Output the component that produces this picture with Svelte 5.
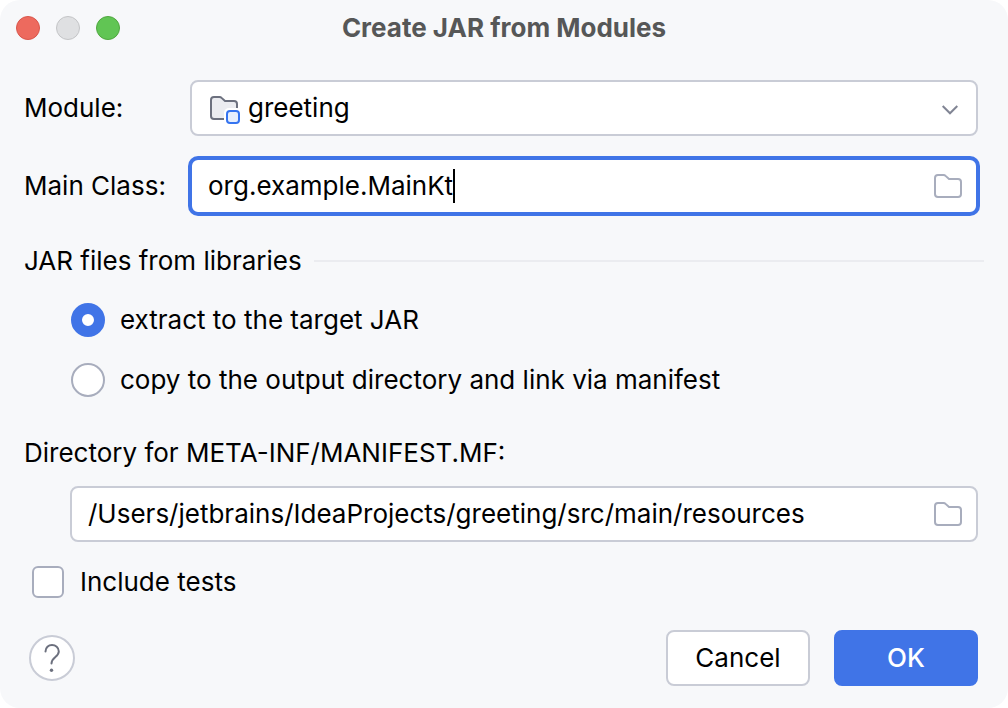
<script>
    let module = $state('greeting')
    let mainClass = $state('org.example.MainKt')
    let libraries = $state('extract')
    let directory = $state('/Users/jetbrains/IdeaProjects/greeting/src/main/resources')
    let includeTests = $state(false)
</script>

{#snippet folder()}
    <svg class="folder" width="32" height="32" viewBox="0 0 32 32" fill="none" aria-hidden="true">
        <path d="M3 8a3 3 0 0 1 3-3h5.500a3 3 0 0 1 2.100.9L17 9h9a3 3 0 0 1 3 3v12a3 3 0 0 1-3 3H6a3 3 0 0 1-3-3z" stroke="#a8adbd" stroke-width="2"/>
    </svg>
{/snippet}

<main class="dialog">
    <header class="titlebar">
        <div class="lights">
            <button class="light light--close" aria-label="Close"></button>
            <button class="light light--minimize" aria-label="Minimize" disabled></button>
            <button class="light light--zoom" aria-label="Zoom"></button>
        </div>
        <h1 class="title">Create JAR from Modules</h1>
    </header>

    <form class="content" onsubmit={(e) => e.preventDefault()}>
        <div class="fields">
            <label class="label" for="module">Module:</label>
            <div class="select">
                <select class="select__input" id="module" bind:value={module}>
                    <option value="greeting">greeting</option>
                </select>
                <svg class="select__icon" width="32" height="32" viewBox="0 0 32 32" fill="none" aria-hidden="true">
                    <path d="M3 8a3 3 0 0 1 3-3h5.500a3 3 0 0 1 2.100.9L17 9h9a3 3 0 0 1 3 3v15H3z" fill="#ebecf0"/>
                    <path d="M16 27H6a3 3 0 0 1-3-3V8a3 3 0 0 1 3-3h5.500a3 3 0 0 1 2.100.9L17 9h9a3 3 0 0 1 3 3v5" stroke="#6c707e" stroke-width="2"/>
                    <rect x="16" y="16" width="18" height="18" rx="5" fill="#fff"/>
                    <rect x="19" y="19" width="12" height="12" rx="3" fill="#e7effd" stroke="#3574f0" stroke-width="2"/>
                </svg>
                <svg class="select__arrow" width="32" height="32" viewBox="0 0 32 32" fill="none" aria-hidden="true">
                    <path d="M8.700 14l7.300 7.300 7.300-7.300" stroke="#818594" stroke-width="2"/>
                </svg>
            </div>

            <label class="label" for="mainClass">Main Class:</label>
            <div class="field field--active">
                <input class="field__input field__input--fit" id="mainClass" type="text" spellcheck="false" bind:value={mainClass}>
                <span class="caret"></span>
                <button class="browse" type="button" aria-label="Browse main class">{@render folder()}</button>
            </div>
        </div>

        <fieldset class="group">
            <legend class="group__legend">
                <span>JAR files from libraries</span>
                <span class="group__line"></span>
            </legend>
            <label class="option">
                <input class="radio" type="radio" name="libraries" value="extract" bind:group={libraries}>
                extract to the target JAR
            </label>
            <label class="option">
                <input class="radio" type="radio" name="libraries" value="copy" bind:group={libraries}>
                copy to the output directory and link via manifest
            </label>
        </fieldset>

        <label class="label label--directory" for="directory">Directory for META-INF/MANIFEST.MF:</label>
        <div class="field field--directory">
            <input class="field__input" id="directory" type="text" spellcheck="false" bind:value={directory}>
            <button class="browse" type="button" aria-label="Browse directory">{@render folder()}</button>
        </div>

        <label class="tests">
            <input class="checkbox" type="checkbox" bind:checked={includeTests}>
            Include tests
        </label>

        <footer class="footer">
            <button class="help" type="button" aria-label="Help">
                <svg width="42" height="42" viewBox="0 0 42 42" fill="none" aria-hidden="true">
                    <path d="M14.500 14.500C14.500 10.500 17.500 8 21 8s6.800 2.500 6.800 6.500c0 5.500-7.300 5.500-7.300 12" stroke="#6c707e" stroke-width="2" stroke-linecap="round"/>
                    <circle cx="20.500" cy="33.300" r="1.700" fill="#6c707e"/>
                </svg>
            </button>
            <button class="btn" type="button">Cancel</button>
            <button class="btn btn--primary" type="submit">OK</button>
        </footer>
    </form>
</main>

<style>
    :global(body) {
        background: #fff;
    }
    .dialog, .dialog * {
        box-sizing: border-box;
    }
    .dialog {
        border-radius: 20px;
        background: #f7f8fa;
        color: #000;
        font-family: Inter, "Liberation Sans", sans-serif;
        font-size: 26px;
        line-height: 32px;
    }
    input, select, button {
        margin: 0;
        font: inherit;
        color: inherit;
    }

    /* title bar */
    .titlebar {
        display: grid;
        grid-template-columns: 1fr auto 1fr;
        align-items: center;
        height: 56px;
        padding: 0 16px;
    }
    .lights {
        display: flex;
        gap: 16px;
    }
    .light {
        width: 24px;
        height: 24px;
        padding: 0;
        border: 1px solid;
        border-radius: 50%;
    }
    .light--close {
        border-color: #d9564b;
        background: #ed6a5e;
    }
    .light--minimize {
        border-color: #c4c5c7;
        background: #dfe0e2;
    }
    .light--zoom {
        border-color: #50a73f;
        background: #61c554;
    }
    .title {
        margin: 0;
        font-size: 26px;
        line-height: 32px;
        font-weight: 700;
        color: #565757;
    }

    /* fields */
    .content {
        padding: 24px 30px 22px 24px;
    }
    .fields {
        display: grid;
        grid-template-columns: 144px 1fr;
        align-items: center;
        gap: 22px;
    }
    .label {
        display: block;
        white-space: nowrap;
    }
    .select {
        position: relative;
    }
    .select__input {
        display: block;
        width: 100%;
        height: 56px;
        padding: 0 56px;
        border: 2px solid #c9ccd6;
        border-radius: 8px;
        background: #fff;
        appearance: none;
    }
    .select__icon, .select__arrow {
        position: absolute;
        top: 12px;
        pointer-events: none;
    }
    .select__icon {
        left: 18px;
        overflow: visible;
    }
    .select__arrow {
        right: 12px;
    }
    .field {
        display: flex;
        align-items: center;
        height: 56px;
        padding: 0 12px 0 16px;
        border: 2px solid #c9ccd6;
        border-radius: 8px;
        background: #fff;
    }
    .field--active {
        border-color: #4074e7;
        box-shadow: 0 0 0 2px #4074e7;
    }
    .field__input {
        flex: 1;
        min-width: 0;
        height: 32px;
        padding: 0;
        border: none;
        outline: none;
        background: transparent;
    }
    .field__input--fit {
        flex: none;
        field-sizing: content;
        caret-color: transparent;
    }
    .caret {
        width: 2px;
        height: 34px;
        background: #000;
    }
    .browse {
        display: flex;
        margin-left: auto;
        padding: 0;
        border: none;
        background: transparent;
    }

    /* libraries */
    .group {
        margin: 31px 0 0;
        padding: 0;
        border: none;
    }
    .group__legend {
        display: flex;
        align-items: center;
        gap: 12px;
        width: calc(100% + 6px);
        padding: 0;
        margin-bottom: 26px;
    }
    .group__line {
        flex: 1;
        height: 2px;
        background: #ebecf0;
    }
    .option {
        display: flex;
        align-items: center;
        gap: 15px;
        height: 34px;
        margin: 0 0 26px 47px;
    }
    .radio {
        width: 34px;
        height: 34px;
        border: 2px solid #a8adbd;
        border-radius: 50%;
        background: #fff;
        appearance: none;
    }
    .radio:checked {
        border: 11px solid #4074e7;
    }

    /* manifest */
    .label--directory {
        margin-top: 14px;
    }
    .field--directory {
        margin: 17px 0 0 46px;
    }
    .tests {
        display: flex;
        align-items: center;
        gap: 16px;
        margin: 24px 0 0 8px;
    }
    .checkbox {
        width: 32px;
        height: 32px;
        border: 2px solid #a8adbd;
        border-radius: 6px;
        background: #fff;
        appearance: none;
    }
    .checkbox:checked {
        border-color: #4074e7;
        background: #4074e7;
    }

    /* buttons */
    .footer {
        display: flex;
        align-items: center;
        gap: 24px;
        margin-top: 32px;
    }
    .help {
        width: 46px;
        height: 46px;
        margin: 0 auto 0 5px;
        padding: 0;
        border: 2px solid #c9ccd6;
        border-radius: 50%;
        background: #fff;
    }
    .help svg {
        display: block;
    }
    .btn {
        width: 144px;
        height: 56px;
        border: 2px solid #c9ccd6;
        border-radius: 8px;
        background: #fff;
    }
    .btn--primary {
        border-color: #4074e7;
        background: #4074e7;
        color: #fff;
        font-weight: 500;
    }
</style>
